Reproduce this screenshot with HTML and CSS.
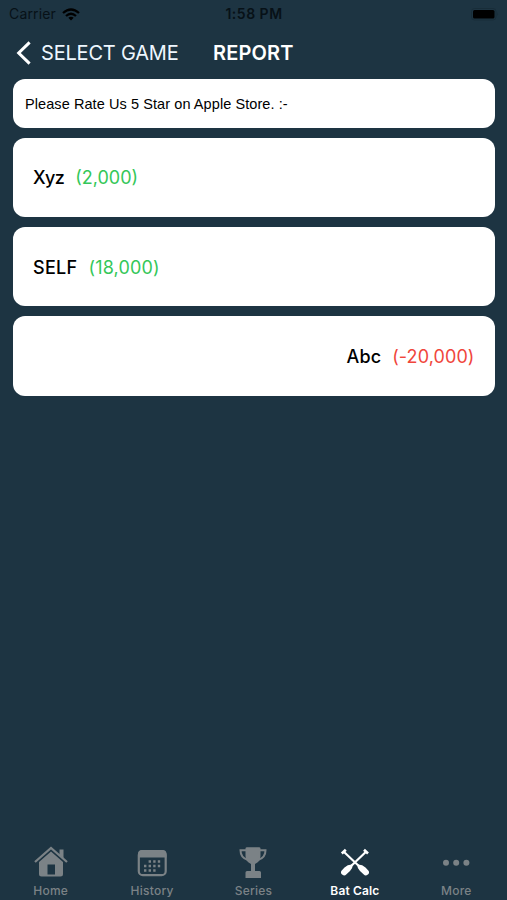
FILE: index.html
```html
<!DOCTYPE html>
<html lang="en">
<head>
<meta charset="utf-8">
<title>Report</title>
<link rel="stylesheet" href="styles.css">
</head>
<body>
<div class="status">
  <div class="carrier"><span class="carrier-name">Carrier</span>
    <svg class="wifi" width="18" height="13" viewBox="0 0 18 13"><g fill="none" stroke="#000" stroke-width="2.3"><path d="M1 5Q9-2 17 5"/><path d="M4 8Q9 3.4 14 8"/></g><path d="M6.3 9.8Q9 7.6 11.7 9.8L9 12.6Z"/></svg>
  </div>
  <div class="time">1:58 PM</div>
  <div class="power"><svg width="28" height="13" viewBox="0 0 28 13"><rect x=".5" y=".5" width="24.500" height="11.500" rx="3" fill="none" stroke="#182d39"/><rect x="2" y="2" width="21.500" height="8.500" rx="1.500"/><path d="M26.300 4.500Q28 6.200 26.300 8Z" fill="#182d39"/></svg></div>
</div>
<header class="nav">
  <svg class="back" width="16" height="26" viewBox="0 0 16 26"><path d="M13.600 2.400L2.700 13L13.600 23.600" fill="none" stroke="#fff" stroke-width="3"/></svg>
  <span class="back-label">SELECT GAME</span>
  <h1 class="title">REPORT</h1>
</header>
<main class="cards">
  <section class="notice"><span>Please Rate Us 5 Star on Apple Store. :-</span></section>
  <section class="card"><span class="name xyz">Xyz</span><span class="gain">(2,000)</span></section>
  <section class="card"><span class="name self">SELF</span><span class="gain eighteen">(18,000)</span></section>
  <section class="card end"><span class="name abc">Abc</span><span class="loss">(-20,000)</span></section>
</main>
<nav class="tabs">
  <div class="tab"><svg width="34" height="32" viewBox="0 0 34 32"><path d="M1 16L17 2L33 16" fill="none" stroke="currentColor" stroke-width="2.300"/><path d="M25.500 3.500h4v9l-4-3.500Z" fill="currentColor"/><path fill-rule="evenodd" d="M5 16L17 5.500L29 16V28q0 2.500-2.500 2.500h-19Q5 30.500 5 28ZM13.500 18.500V28.500h7.500V18.500Z" fill="currentColor"/></svg><span>Home</span></div>
  <div class="tab"><svg width="34" height="32" viewBox="0 0 34 32"><rect x="3.800" y="5" width="26.900" height="24.200" rx="4" fill="none" stroke="currentColor" stroke-width="2.200"/><path d="M3 11.500V8q0-4 4-4h20.500q4 0 4 4v3.500Z" fill="currentColor"/><path d="M13.600 15.500H26M9 20H26M9 24.500H21.500" fill="none" stroke="currentColor" stroke-width="2.400" stroke-dasharray="2.400 2.200"/></svg><span>History</span></div>
  <div class="tab"><svg width="34" height="32" viewBox="0 0 34 32"><path d="M10.500 4.300H4.500Q4.500 12 12 14M24 4.300h5.500Q29.500 12 22 14" fill="none" stroke="currentColor" stroke-width="2"/><path d="M9.500 2.500Q9.500 1.200 11 1.200h12q1.500 0 1.500 1.300V10Q24.500 15.500 19 18v7h4.500q1.500 0 1.500 1.500V32H9.500v-5.500Q9.500 25 11 25h4v-7Q9.500 15.500 9.500 10Z" fill="currentColor"/></svg><span>Series</span></div>
  <div class="tab active"><svg width="34" height="32" viewBox="0 0 34 32"><path d="M5.800 5.800L24 23M28 5.800L10 23" stroke="currentColor" stroke-width="2.200"/><path d="M3.800 7.500L7.800 3.700M26 3.700L30 7.500" stroke="currentColor" stroke-width="2.600"/><path d="M19.200 18.500Q24 18 27.500 21.500L30.500 24.700Q32 27 29.500 28.800Q27.500 30.300 25.500 28.200L22 25Q19.200 22.500 19.200 18.500ZM14.800 18.500Q10 18 6.500 21.500L3.500 24.700Q2 27 4.500 28.800Q6.500 30.300 8.500 28.200L12 25Q14.800 22.500 14.800 18.500Z" fill="currentColor"/></svg><span>Bat Calc</span></div>
  <div class="tab"><svg width="34" height="32" viewBox="0 0 34 32"><g fill="currentColor"><circle cx="7" cy="16.700" r="3"/><circle cx="17.200" cy="16.700" r="3"/><circle cx="27.400" cy="16.700" r="3"/></g></svg><span>More</span></div>
</nav>
</body>
</html>
```
FILE: styles.css
```css
* { box-sizing: border-box; }
body {
  margin: 0;
  height: 900px;
  overflow: hidden;
  display: flex;
  flex-direction: column;
  background: #1d3442;
  color: #000;
  font-family: Inter, "Liberation Sans", sans-serif;
}
.status {
  height: 28px;
  flex: none;
  padding: 0 8px 0 9px;
  display: grid;
  grid-template-columns: 1fr auto 1fr;
  align-items: center;
  font-size: 14px;
  line-height: 28px;
}
.carrier { display: flex; align-items: center; gap: 6px; color: #071117; }
.carrier-name { letter-spacing: .15px; }
.time { font-weight: 600; font-size: 14px; letter-spacing: .5px; color: #071117; }
.power { display: flex; justify-content: flex-end; }
.nav {
  height: 51px;
  flex: none;
  display: flex;
  align-items: center;
  padding: 0 0 2px 16px;
  color: #fff;
  font-size: 20px;
  white-space: nowrap;
}
.back { margin-right: 9px; }
.back-label { width: 172px; letter-spacing: -.2px; color: #eef7ff; }
.title { margin: 0; font-size: 20px; font-weight: 600; letter-spacing: .15px; }
.cards { display: flex; flex-direction: column; gap: 9.700px; padding: 0 12.500px 0 13px; }
.notice, .card {
  display: flex;
  align-items: center;
  background: #fff;
  border-radius: 12px;
  white-space: nowrap;
}
.notice {
  height: 49px;
  padding-left: 12px;
  font: 14.500px "Liberation Sans", sans-serif;
  letter-spacing: .08px;
}
.card { height: 79.500px; padding: 1px 20px 0; font-size: 18px; gap: 11px; }
.end { justify-content: flex-end; }
.name { font-weight: 500; }
.xyz { letter-spacing: -.6px; }
.self { letter-spacing: .3px; }
.abc { letter-spacing: .1px; }
.gain { color: #34c759; }
.eighteen { letter-spacing: .15px; }
.loss { color: #f0463c; letter-spacing: .1px; }
.tabs {
  margin-top: auto;
  height: 54px;
  display: grid;
  grid-template-columns: repeat(5, 1fr);
  color: #7b8286;
}
.tab {
  display: flex;
  flex-direction: column;
  align-items: center;
  font-size: 12px;
  font-weight: 500;
  letter-spacing: .25px;
}
.tab svg { display: block; flex: none; }
.tab span { line-height: 16px; margin-top: 5px; }
.active { color: #fff; font-weight: 600; letter-spacing: .15px; }
```
